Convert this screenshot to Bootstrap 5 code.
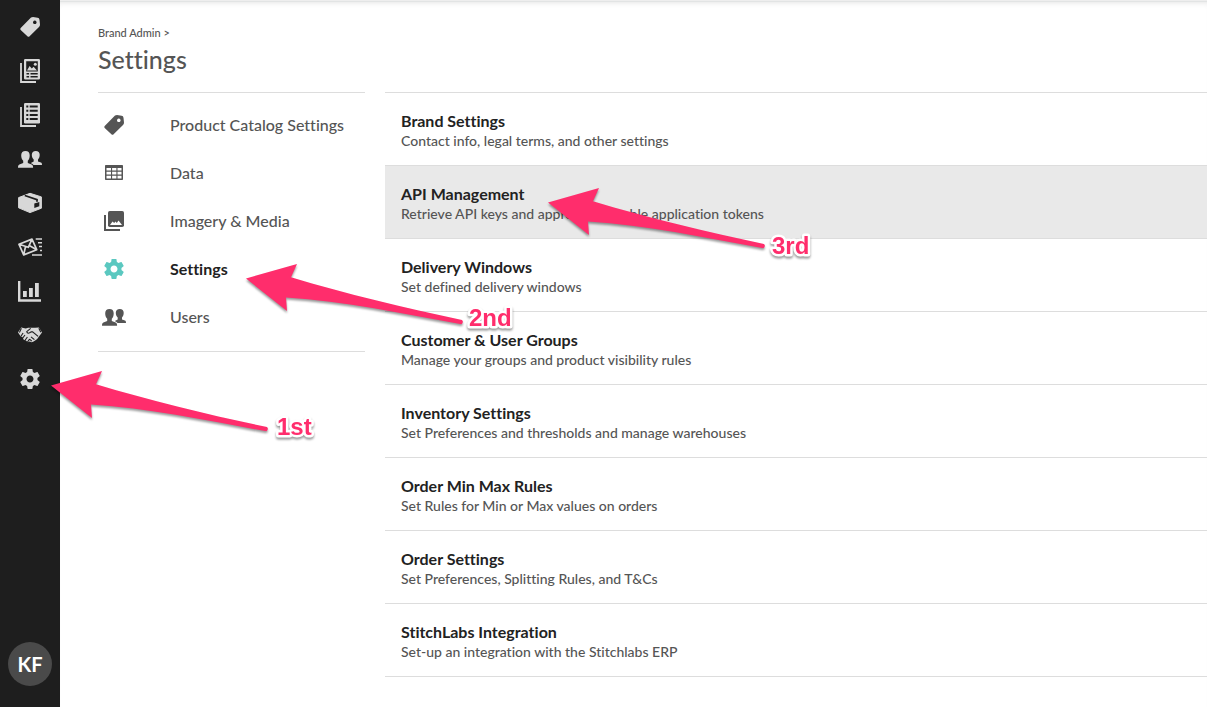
<!DOCTYPE html>
<html lang="en">
<head>
<meta charset="utf-8">
<meta name="viewport" content="width=device-width, initial-scale=1">
<title>Settings - Brand Admin</title>
<link href="https://cdn.jsdelivr.net/npm/bootstrap@5.3.0/dist/css/bootstrap.min.css" rel="stylesheet">
<style>
  body { font-family: Lato, "Liberation Sans", sans-serif; font-variant-ligatures: none; color: #555; background: #fff; }
  a { color: inherit; text-decoration: none; }
  .rail { width: 60px; background: #1e1e1e; color: #d8d8d8; padding: 5px 0 21px; }
  .rail-link { height: 44px; }
  .rail svg { --hole: #1e1e1e; }
  .side-menu svg { --hole: #fff; }
  .avatar { width: 44px; height: 44px; background: #4a4a4a; color: #fff; font-size: 20px; font-weight: 700; }
  .page { padding: 23px 0 30px 38px; box-shadow: inset 0 1px 0 #eee, inset 0 2px 0 #e2e4e4, inset 0 7px 6px -5px #ddd; min-width: 0; }
  .crumb { font-size: 11px; line-height: 20px; font-weight: 500; }
  .page-title { font-size: 25px; line-height: 32px; font-weight: 500; margin: 0 0 17px; }
  .columns { gap: 20px; }
  .side-menu { width: 267px; border: solid #ddd; border-width: 1px 0; padding: 8px 0 10px; }
  .side-link { height: 48px; padding-left: 4px; gap: 44px; font-size: 16px; font-weight: 500; }
  .side-link.active { color: #222; font-weight: 700; }
  .side-link.active > svg:first-child { color: #5bc8c0; }
  .settings-list { border-top: 1px solid #ddd; min-width: 0; }
  .settings-item { padding: 18px 16px 14px; border-bottom: 1px solid #ddd; line-height: 20px; }
  .settings-item.current { background: #e9e9e9; }
  .item-title { font-size: 16px; font-weight: 700; color: #222; line-height: 20px; margin: 0; }
  .item-text { font-size: 14px; font-weight: 500; margin: 0; }
  .callout-arrow { width: 280px; height: 80px; z-index: 5; pointer-events: none; color: #ff2d6c; fill: currentColor; filter: drop-shadow(0 2px 1px rgba(0,0,0,.4)); }
  .callout-arrow text { font: 700 24px "Liberation Sans", sans-serif; stroke: #fff; stroke-width: 5px; stroke-linejoin: round; paint-order: stroke; }
  .from-rail { left: 49px; top: 12px; }
  .from-menu { left: 146px; top: 17px; }
  .from-list { left: 161px; top: 20px; }
</style>
</head>
<body>
<svg class="d-none" aria-hidden="true">
  <symbol id="i-tag" viewBox="0 0 24 24"><path fill="currentColor" fill-rule="evenodd" d="M13 2.6Q14 2 15 2l4.600.7Q21.300 2.900 21.500 4.700L22 9.500Q22 11 21 12L11.600 21.300Q10.500 22.300 9.400 21.300L2.700 15Q1.700 13.900 2.700 12.900ZM16.800 5.500a1.800 1.800 0 1 0 .01 0Z"/></symbol>
  <symbol id="i-lookbook" viewBox="0 0 24 24"><path fill="none" stroke="currentColor" stroke-width="1.8" d="M3 4v19h15"/><path fill="currentColor" fill-rule="evenodd" d="M7.300 0h13.400Q22 0 22 1.300v17.900q0 1.300-1.300 1.300H7.300Q6 20.500 6 19.200V1.300Q6 0 7.300 0ZM8.200 2.200v10.300h11.600V2.200ZM8.500 14v1.500h2.600V14Zm4 0v1.500h7.200V14ZM8.500 17v1.500h2.600V17Zm4 0v1.500h7.200V17Z"/><path fill="currentColor" d="M9 11.500l2.600-4.500 2.200 2.400 1.800-1.600 3.400 3.700z"/><circle cx="17.300" cy="5.200" r="1.500" fill="currentColor"/></symbol>
  <symbol id="i-orders" viewBox="0 0 24 24"><path fill="none" stroke="currentColor" stroke-width="1.800" d="M3 4v19h15"/><rect x="6" width="16" height="20.500" rx="1.300" fill="currentColor"/><path fill="var(--hole)" d="M8.300 2.500h2v2h-2zm3.400 0h8v2h-8zM8.300 6.700h2v2h-2zm3.400 0h8v2h-8zM8.300 10.900h2v2h-2zm3.400 0h8v2h-8zM8.300 15.100h2v2h-2zm3.400 0h8v2h-8z"/></symbol>
  <symbol id="i-users" viewBox="0 0 24 24"><path fill="currentColor" d="M7.500 4c2.700 0 4.200 1.600 4.200 4.200 0 2.300-.6 4.400-1.900 5.600v2.100l3.800 1.500c1 .4 1.500 1.200 1.500 3.300H0c0-2 .5-2.900 1.400-3.300l3.800-1.500v-2.100C3.900 12.600 3.200 10.500 3.200 8.200 3.200 5.600 4.800 4 7.500 4Z"/><path fill="currentColor" d="M17.800 4c2.500 0 3.900 1.400 3.900 3.800 0 2-.6 3.700-1.700 4.700v1.900l2.900 1.100c.8.400 1.100 1 1.100 2.400h-8.500c-.5-.8-1.300-1.200-2.700-1.700.4-.6 1.600-1.100 2.900-1.800v-1.900c-1.200-1-1.900-2.700-1.900-4.700C13.800 5.400 15.300 4 17.800 4Z"/></symbol>
  <symbol id="i-box" viewBox="0 0 24 24"><path fill="currentColor" stroke="currentColor" stroke-linejoin="round" d="M.6 6.600 12 2.300l11.400 3.600v11.300L12 21.600.6 16.800Z"/><path fill="none" stroke="var(--hole)" stroke-width="1.800" d="M6.800 4.500 19 8.600v2.200"/><path fill="var(--hole)" d="m16.300 12.600 5-1.700v4.300l-5 1.800z"/></symbol>
  <symbol id="i-mail" viewBox="0 0 24 24"><path fill="none" stroke="currentColor" stroke-width="1.700" stroke-linejoin="round" d="m1 9.300 13-5.200 4.700 10.600-13 5.200ZM1 9.300l9.300 3L14 4.100M5.700 19.900l1.800-8.300M18.700 14.700l-7-4"/><path fill="none" stroke="currentColor" stroke-width="1.500" d="M17.700 4H24M20 7.800h4M21 11.600h3M22 15.400h2M14 20h10"/></symbol>
  <symbol id="i-chart" viewBox="0 0 24 24"><path fill="none" stroke="currentColor" stroke-width="2.400" d="M1.200 2v19.500H23"/><path fill="currentColor" d="M5 12h3.800v6H5zM11 9h3.800v9H11zM17 4h3.800v14H17z"/></symbol>
  <symbol id="i-deal" viewBox="0 0 24 24"><path fill="currentColor" d="m0 9.500 3.200-5 4.600 1.100 2.300-.9h7l3.800-.2L24 9.400l-3.400 4.500-1.400 2-1.700 1.300-1.900 1.300-2 .8-1.800-.8-2 .7-1.900-1.700-2.200-.8-1.200-2.700-1.900-.8Z"/><path fill="none" stroke="var(--hole)" stroke-width="1.100" d="m12.700 5.300-4 3.300c.5 2.100 2.500 2 4.400.3l1.500-.1 5.500 4.600M3.100 13l2-3M4 16l3-4M6.900 17.500 9.400 14M9.300 19.300l2.300-3.200M13 13.800l3.400 2.900M11.500 16.200l2.300 2M3.400 5.200l-2 4.200M20.800 5.200l2 4"/></symbol>
  <symbol id="i-gear" viewBox="0 0 24 24"><path fill="currentColor" d="M19.430 12.980c.04-.32.07-.64.07-.98s-.03-.66-.07-.98l2.110-1.650c.19-.15.24-.42.12-.64l-2-3.460c-.12-.22-.39-.3-.61-.22l-2.490 1c-.52-.4-1.080-.73-1.690-.98l-.38-2.650C14.460 2.180 14.250 2 14 2h-4c-.25 0-.46.18-.49.42l-.38 2.650c-.61.25-1.170.59-1.690.98l-2.490-1c-.23-.09-.49 0-.61.22l-2 3.460c-.13.22-.07.49.12.64l2.110 1.650c-.04.32-.07.65-.07.98s.03.66.07.98l-2.110 1.650c-.19.15-.24.42-.12.64l2 3.460c.12.22.39.3.61.22l2.490-1c.52.4 1.080.73 1.690.98l.38 2.650c.03.24.24.42.49.42h4c.25 0 .46-.18.49-.42l.38-2.650c.61-.25 1.170-.59 1.690-.98l2.490 1c.23.09.49 0 .61-.22l2-3.460c.12-.22.07-.49-.12-.64l-2.110-1.650zM12 15.500c-1.930 0-3.500-1.570-3.500-3.500s1.570-3.500 3.500-3.500 3.500 1.570 3.500 3.500-1.570 3.500-3.500 3.500z"/></symbol>
  <symbol id="i-table" viewBox="0 0 24 24"><path fill="currentColor" fill-rule="evenodd" d="M3.800 4h16.400q.8 0 .8.800v13.400q0 .8-.8.800H3.800q-.8 0-.8-.8V4.800Q3 4 3.800 4ZM4.500 7v2.500H9V7Zm5.600 0v2.500h4.300V7Zm5.400 0v2.500h4V7Zm-11 3.700v2.800H9v-2.800Zm5.600 0v2.800h4.300v-2.800Zm5.400 0v2.800h4v-2.800Zm-11 4v2.800H9v-2.800Zm5.600 0v2.800h4.300v-2.800Zm5.400 0v2.800h4v-2.800Z"/></symbol>
  <symbol id="i-media" viewBox="0 0 24 24"><path fill="none" stroke="currentColor" stroke-width="2" d="M3 6v15h15"/><rect x="6" y="2" width="16" height="16" rx="1.800" fill="currentColor"/><path fill="var(--hole)" d="m8 16 2.500-3.500 1.700 1.500 1.300-1.500 1.300 1.500 1.700-2.500 3.500 4.500z"/></symbol>
  <symbol id="i-arrow" viewBox="0 0 220 64"><path d="M2 16.500 53 2l-6 13.300C103 32 160 46 218 58q2 2-.5 4.300C160 52 100 39 42 35.500L43 49Z"/></symbol>
</svg>

<div class="d-flex min-vh-100">
  <nav class="rail d-flex flex-column flex-shrink-0" aria-label="Main">
    <a class="rail-link d-flex align-items-center justify-content-center" href="#" aria-label="Products"><svg width="24" height="24"><use href="#i-tag"/></svg></a>
    <a class="rail-link d-flex align-items-center justify-content-center" href="#" aria-label="Lookbooks"><svg width="24" height="24"><use href="#i-lookbook"/></svg></a>
    <a class="rail-link d-flex align-items-center justify-content-center" href="#" aria-label="Orders"><svg width="24" height="24"><use href="#i-orders"/></svg></a>
    <a class="rail-link d-flex align-items-center justify-content-center" href="#" aria-label="Customers"><svg width="24" height="24"><use href="#i-users"/></svg></a>
    <a class="rail-link d-flex align-items-center justify-content-center" href="#" aria-label="Shipments"><svg width="24" height="24"><use href="#i-box"/></svg></a>
    <a class="rail-link d-flex align-items-center justify-content-center" href="#" aria-label="Mail"><svg width="24" height="24"><use href="#i-mail"/></svg></a>
    <a class="rail-link d-flex align-items-center justify-content-center" href="#" aria-label="Reports"><svg width="24" height="24"><use href="#i-chart"/></svg></a>
    <a class="rail-link d-flex align-items-center justify-content-center" href="#" aria-label="Partners"><svg width="24" height="24"><use href="#i-deal"/></svg></a>
    <a class="rail-link d-flex align-items-center justify-content-center position-relative" href="#" aria-label="Settings"><svg width="24" height="24"><use href="#i-gear"/></svg>
      <svg class="callout-arrow from-rail position-absolute"><use href="#i-arrow" width="220" height="64"/><text x="228" y="66">1st</text></svg></a>
    <button type="button" class="avatar btn p-0 border-0 rounded-circle mt-auto mx-auto">KF</button>
  </nav>

  <main class="page flex-grow-1">
    <div class="crumb"><a href="#">Brand Admin</a> &gt;</div>
    <h1 class="page-title">Settings</h1>
    <div class="columns d-flex align-items-start">
      <nav class="side-menu flex-shrink-0" aria-label="Settings sections">
        <a class="side-link d-flex align-items-center" href="#"><svg width="24" height="24"><use href="#i-tag"/></svg>Product Catalog Settings</a>
        <a class="side-link d-flex align-items-center" href="#"><svg width="24" height="24"><use href="#i-table"/></svg>Data</a>
        <a class="side-link d-flex align-items-center" href="#"><svg width="24" height="24"><use href="#i-media"/></svg>Imagery &amp; Media</a>
        <a class="side-link active d-flex align-items-center position-relative" href="#" aria-current="page"><svg width="24" height="24"><use href="#i-gear"/></svg>Settings
          <svg class="callout-arrow from-menu position-absolute"><use href="#i-arrow" width="220" height="64"/><text x="225" y="64">2nd</text></svg></a>
        <a class="side-link d-flex align-items-center" href="#"><svg width="24" height="24"><use href="#i-users"/></svg>Users</a>
      </nav>
      <div class="settings-list flex-grow-1">
        <a class="settings-item d-block" href="#"><h2 class="item-title">Brand Settings</h2><p class="item-text">Contact info, legal terms, and other settings</p></a>
        <a class="settings-item current d-block position-relative" href="#"><h2 class="item-title">API Management</h2><p class="item-text">Retrieve API keys and approve or enable application tokens</p>
          <svg class="callout-arrow from-list position-absolute"><use href="#i-arrow" width="220" height="64"/><text x="226" y="68">3rd</text></svg></a>
        <a class="settings-item d-block" href="#"><h2 class="item-title">Delivery Windows</h2><p class="item-text">Set defined delivery windows</p></a>
        <a class="settings-item d-block" href="#"><h2 class="item-title">Customer &amp; User Groups</h2><p class="item-text">Manage your groups and product visibility rules</p></a>
        <a class="settings-item d-block" href="#"><h2 class="item-title">Inventory Settings</h2><p class="item-text">Set Preferences and thresholds and manage warehouses</p></a>
        <a class="settings-item d-block" href="#"><h2 class="item-title">Order Min Max Rules</h2><p class="item-text">Set Rules for Min or Max values on orders</p></a>
        <a class="settings-item d-block" href="#"><h2 class="item-title">Order Settings</h2><p class="item-text">Set Preferences, Splitting Rules, and T&amp;Cs</p></a>
        <a class="settings-item d-block" href="#"><h2 class="item-title">StitchLabs Integration</h2><p class="item-text">Set-up an integration with the Stitchlabs ERP</p></a>
      </div>
    </div>
  </main>
</div>
<script src="https://cdn.jsdelivr.net/npm/bootstrap@5.3.0/dist/js/bootstrap.bundle.min.js"></script>
</body>
</html>
